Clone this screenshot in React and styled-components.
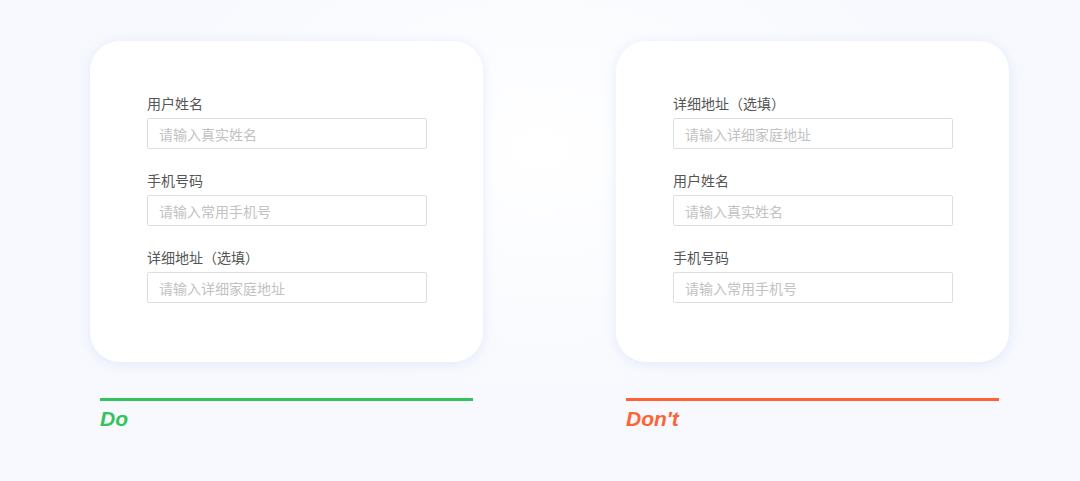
import React from 'react';
import styled, {createGlobalStyle} from 'styled-components';

const GlobalStyle = createGlobalStyle`
  html, body {
    margin: 0;
    padding: 0;
  }
  body {
    background: #f8f9fe;
    font-family: "Noto Sans CJK SC", "Noto Sans", sans-serif;
  }
`

const doFields = [
    {label: '用户姓名', placeholder: '请输入真实姓名'},
    {label: '手机号码', placeholder: '请输入常用手机号'},
    {label: '详细地址（选填）', placeholder: '请输入详细家庭地址'},
];

const dontFields = [doFields[2], doFields[0], doFields[1]];

const Example = ({fields, caption, color}) => (
    <Column>
        <Card>
            {fields.map((f) => (
                <Field key={f.label}>
                    <Label>{f.label}</Label>
                    <Input readOnly placeholder={f.placeholder}/>
                </Field>
            ))}
        </Card>
        <Rule color={color}/>
        <Caption color={color}>{caption}</Caption>
    </Column>
);

const App = () => {
    return (
        <Page>
            <GlobalStyle/>
            <Example fields={doFields} caption="Do" color="#34c35a"/>
            <Example fields={dontFields} caption="Don't" color="#ff6333"/>
        </Page>
    );
};

export default App;

const Page = styled.div`
  width: 1080px;
  height: 481px;
  box-sizing: border-box;
  padding: 41px 0 0 90px;
  display: flex;
  gap: 133px;
  background: radial-gradient(ellipse 420px 260px at 540px 150px, #ffffff 0%, rgba(255,255,255,0) 100%), #f7f9fe;
  overflow: hidden;
`

const Column = styled.div`
  width: 393px;
  display: flex;
  flex-direction: column;
`

const Card = styled.div`
  height: 321px;
  box-sizing: border-box;
  padding: 53px 56px 0 57px;
  background: #ffffff;
  border-radius: 30px;
  box-shadow: 0 2px 12px rgba(208, 218, 250, 0.55);
  display: flex;
  flex-direction: column;
  gap: 22px;
`

const Field = styled.div`
  display: flex;
  flex-direction: column;
  gap: 6px;
`

const Label = styled.div`
  font-size: 14px;
  line-height: 18px;
  color: #555555;
  white-space: nowrap;
`

const Input = styled.input`
  width: 280px;
  height: 31px;
  box-sizing: border-box;
  border: 1px solid #dedede;
  border-radius: 2px;
  padding: 0 11px;
  font-family: "Noto Sans CJK SC", "Noto Sans", sans-serif;
  font-size: 14px;
  background: #ffffff;
  outline: none;
  &::placeholder {
    color: #c2c2c2;
  }
`

const Rule = styled.div`
  margin: 36px 10px 0 10px;
  height: 3px;
  background: ${p => p.color};
`

const Caption = styled.div`
  margin: 6px 0 0 10px;
  font-family: "Liberation Sans", Arial, sans-serif;
  font-weight: 700;
  font-style: italic;
  font-size: 21px;
  line-height: 24px;
  color: ${p => p.color};
`
